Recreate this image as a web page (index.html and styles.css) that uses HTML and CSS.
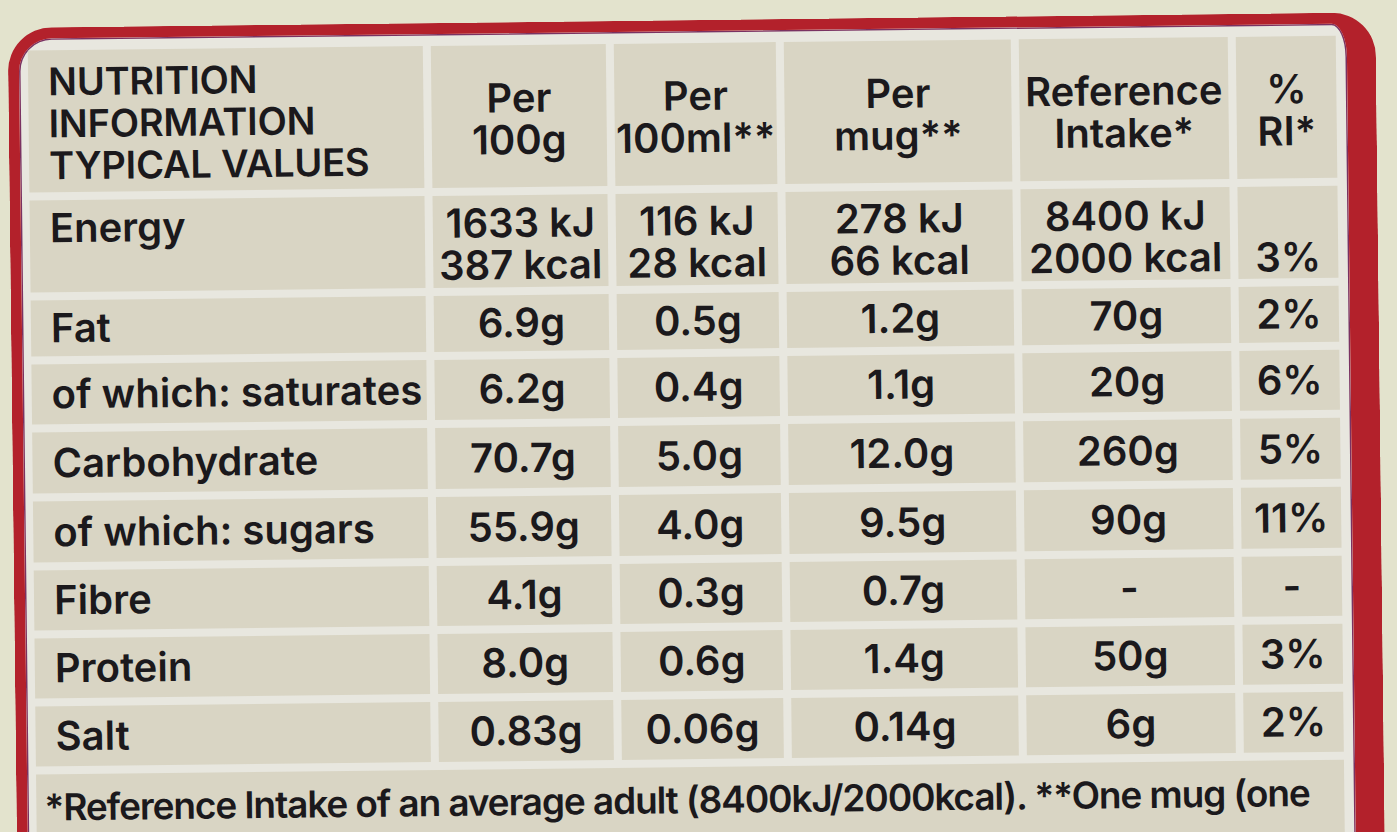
FILE: index.html
```html
<!DOCTYPE html>
<html lang="en">
<head>
<meta charset="utf-8">
<title>Nutrition Information</title>
<link rel="stylesheet" href="styles.css">
</head>
<body>
<div class="label">
  <div class="grid">
    <div class="cell head name">NUTRITION<br>INFORMATION<br>TYPICAL VALUES</div>
    <div class="cell head">Per<br>100g</div>
    <div class="cell head">Per<br>100ml**</div>
    <div class="cell head">Per<br>mug**</div>
    <div class="cell head">Reference<br>Intake*</div>
    <div class="cell head">%<br>RI*</div>

    <div class="cell name energy-name">Energy</div>
    <div class="cell energy">1633 kJ<br>387 kcal</div>
    <div class="cell energy">116 kJ<br>28 kcal</div>
    <div class="cell energy">278 kJ<br>66 kcal</div>
    <div class="cell energy">8400 kJ<br>2000 kcal</div>
    <div class="cell energy-ri">3%</div>

    <div class="cell name">Fat</div>
    <div class="cell">6.9g</div>
    <div class="cell">0.5g</div>
    <div class="cell">1.2g</div>
    <div class="cell">70g</div>
    <div class="cell">2%</div>

    <div class="cell name">of which: saturates</div>
    <div class="cell">6.2g</div>
    <div class="cell">0.4g</div>
    <div class="cell">1.1g</div>
    <div class="cell">20g</div>
    <div class="cell">6%</div>

    <div class="cell name">Carbohydrate</div>
    <div class="cell">70.7g</div>
    <div class="cell">5.0g</div>
    <div class="cell">12.0g</div>
    <div class="cell">260g</div>
    <div class="cell">5%</div>

    <div class="cell name">of which: sugars</div>
    <div class="cell">55.9g</div>
    <div class="cell">4.0g</div>
    <div class="cell">9.5g</div>
    <div class="cell">90g</div>
    <div class="cell">11%</div>

    <div class="cell name">Fibre</div>
    <div class="cell">4.1g</div>
    <div class="cell">0.3g</div>
    <div class="cell">0.7g</div>
    <div class="cell">-</div>
    <div class="cell">-</div>

    <div class="cell name">Protein</div>
    <div class="cell">8.0g</div>
    <div class="cell">0.6g</div>
    <div class="cell">1.4g</div>
    <div class="cell">50g</div>
    <div class="cell">3%</div>

    <div class="cell name">Salt</div>
    <div class="cell">0.83g</div>
    <div class="cell">0.06g</div>
    <div class="cell">0.14g</div>
    <div class="cell">6g</div>
    <div class="cell">2%</div>

    <div class="cell foot">*Reference Intake of an average adult (8400kJ/2000kcal). **One mug (one</div>
  </div>
</div>
</body>
</html>
```

FILE: styles.css
```css
html, body {
  margin: 0;
  padding: 0;
  height: 832px;
  overflow: hidden;
  background: #e3e3cd;
}

body {
  font-family: Inter, "Noto Sans", sans-serif;
  color: #1b191c;
}

.label {
  margin: 20px 0 0 12px;
  width: 1368px;
  box-sizing: border-box;
  border: solid #b3212b;
  border-width: 11px 29px 0 11px;
  border-radius: 44px 44px 0 0;
  padding: 12px 10px 0 9px;
  background: #e8e7df;
  box-shadow: inset 0 0 0 1.5px #7a3262;
  transform: rotate(-0.65deg);
  transform-origin: 688px 396px;
}

.grid {
  display: grid;
  grid-template-columns: 395px 175px 162px 227px 209px 100px;
  grid-template-rows: 142px 92px 56px 60px 61px 61px 60px 60px 60px 110px;
  gap: 8px;
}

.cell {
  background: #d9d5c4;
  display: flex;
  align-items: center;
  justify-content: center;
  text-align: center;
  font-size: 40px;
  font-weight: 560;
  line-height: 42px;
  white-space: nowrap;
}

.name {
  justify-content: flex-start;
  text-align: left;
  padding-left: 20px;
}

.head {
  padding-top: 6px;
  box-sizing: border-box;
}

.head.name {
  font-size: 38px;
  letter-spacing: -0.2px;
  padding-top: 4px;
}

.energy-name {
  align-items: flex-start;
  padding-top: 7px;
}

.energy {
  padding-top: 6px;
}

.energy-ri {
  background: #d9d5c4;
  display: flex;
  justify-content: center;
  align-items: flex-start;
  padding-top: 50px;
  font-size: 40px;
  font-weight: 560;
  line-height: 42px;
}

.foot {
  grid-column: 1 / -1;
  justify-content: flex-start;
  align-items: flex-start;
  padding: 12px 0 0 8px;
  font-size: 37px;
  letter-spacing: -1.1px;
}
```
